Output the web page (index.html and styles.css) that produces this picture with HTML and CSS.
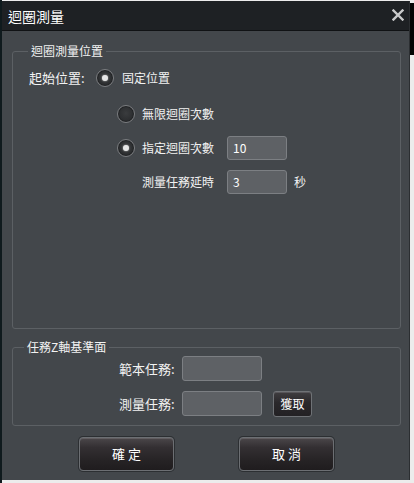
FILE: index.html
```html
<!DOCTYPE html>
<html lang="zh-Hant">
<head>
<meta charset="utf-8">
<title>迴圈測量</title>
<link rel="stylesheet" href="styles.css">
</head>
<body>
<div class="window">
  <div class="titlebar">
    <span class="title">迴圈測量</span>
    <svg class="close" width="12" height="12" viewBox="0 0 12 12" aria-label="close">
      <path d="M1.5 1.5 L10.5 10.5 M10.5 1.5 L1.5 10.5" stroke="#c9cacb" stroke-width="2.4" stroke-linecap="square" fill="none"/>
    </svg>
  </div>
  <div class="content">
    <fieldset class="group group-loop">
      <legend>迴圈測量位置</legend>
      <div class="loop-body">
        <div class="row-start">
          <span class="label-start">起始位置:</span>
          <span class="radio checked"></span>
          <span class="opt">固定位置</span>
        </div>
        <div class="loop-grid">
          <span class="radio"></span>
          <span class="opt wide">無限迴圈次數</span>
          <span class="radio checked"></span>
          <span class="opt">指定迴圈次數</span>
          <span class="field">10</span>
          <span class="unit"></span>
          <span class="cell"></span>
          <span class="opt">測量任務延時</span>
          <span class="field">3</span>
          <span class="unit">秒</span>
        </div>
      </div>
    </fieldset>
    <fieldset class="group group-z">
      <legend>任務Z軸基準面</legend>
      <div class="z-grid">
        <span class="label">範本任務:</span>
        <span class="field field-wide"></span>
        <span class="cell"></span>
        <span class="label">測量任務:</span>
        <span class="field field-wide"></span>
        <span class="btn-small">獲取</span>
      </div>
    </fieldset>
    <div class="actions">
      <span class="btn">確 定</span>
      <span class="btn">取 消</span>
    </div>
  </div>
</div>
</body>
</html>
```

FILE: styles.css
```css
* { box-sizing: border-box; }

html, body { margin: 0; padding: 0; }

body {
  width: 414px;
  height: 483px;
  overflow: hidden;
  padding: 1px 0 0 2px;
  font-family: "Noto Sans CJK TC", "Noto Sans", sans-serif;
  font-size: 12px;
  color: #f2f2f2;
  background:
    linear-gradient(#050505, #050505) right 0 top 3px / 4px 52px no-repeat,
    linear-gradient(to right, #0f1a1d 2px, #ececec 2px);
}

.window {
  width: 408px;
  height: 479px;
  background: #43474b;
  border-right: 1px solid #2b2e31;
  display: flex;
  flex-direction: column;
}

.titlebar {
  height: 30px;
  flex: none;
  background: #1e2124;
  border-bottom: 1px solid #101214;
  display: flex;
  align-items: center;
  justify-content: space-between;
  padding: 0 5px 0 6px;
}

.title {
  font-size: 14px;
  line-height: 18px;
  color: #ffffff;
}

.close { display: block; margin-top: -1px; }

.content {
  padding: 0 8px 0 10px;
}

.group {
  margin: 0;
  padding: 0;
  border: 1px solid #5c6064;
  border-radius: 3px;
  min-width: 0;
}

.group legend {
  padding: 0 3px;
  font-size: 12px;
  line-height: 16px;
  color: #f2f2f2;
}

.group-loop { margin-top: 12px; }
.group-loop legend { margin-left: 15px; }

.loop-body {
  height: 269px;
  padding: 7px 0 0 16px;
}

.row-start {
  display: flex;
  align-items: center;
  height: 24px;
}

.label-start {
  width: 67px;
  font-size: 13px;
  line-height: 18px;
}

.row-start .opt { margin-left: 8px; }

.opt {
  line-height: 18px;
  white-space: nowrap;
}

.radio {
  width: 18px;
  height: 18px;
  border-radius: 50%;
  flex: none;
  background: radial-gradient(circle at 50% 45%, #3a3c3e 0%, #2a2c2e 70%);
  border: 1px solid #7a7c7f;
  box-shadow: inset 0 0 0 1px #222426;
  display: flex;
  align-items: center;
  justify-content: center;
}

.radio.checked::after {
  content: "";
  width: 6px;
  height: 6px;
  border-radius: 50%;
  background: #e6e6e6;
  box-shadow: 0 0 2px #bdbdbd;
}

.loop-grid {
  margin: 12px 0 0 88px;
  display: grid;
  grid-template-columns: 18px 78px 60px auto;
  grid-template-rows: 24px 24px 24px;
  column-gap: 7px;
  row-gap: 10px;
  align-items: center;
}

.loop-grid .wide { grid-column: 2 / -1; }

.field {
  height: 24px;
  background: #5e6165;
  border: 1px solid #7c7f83;
  border-radius: 3px;
  padding: 0 5px;
  line-height: 22px;
  font-size: 12px;
  color: #ffffff;
}

.unit { line-height: 18px; }

.group-z { margin-top: 10px; }
.group-z legend { margin-left: 11px; }

.z-grid {
  height: 70px;
  padding: 1px 0 9px 106px;
  display: grid;
  grid-template-columns: 57px 80px auto;
  grid-template-rows: 25px 25px;
  column-gap: 6px;
  row-gap: 10px;
  align-items: center;
}

.z-grid .label {
  font-size: 13px;
  line-height: 18px;
  white-space: nowrap;
}

.field-wide { height: 25px; }

.btn-small {
  width: 39px;
  height: 26px;
  margin-left: 5px;
  margin-top: 1px;
  border: 1px solid #6f7276;
  border-radius: 3px;
  background: linear-gradient(#3f3d40, #2a282b 45%, #232124);
  box-shadow: inset 0 1px 0 #58565a;
  display: flex;
  align-items: center;
  justify-content: center;
  line-height: 18px;
  color: #ffffff;
}

.actions {
  margin-top: 11px;
  padding-left: 67px;
  display: flex;
  gap: 65px;
}

.btn {
  width: 95px;
  height: 34px;
  border: 1px solid #6c6f73;
  border-radius: 4px;
  background: linear-gradient(#4b474a, #332f32 30%, #262325 70%, #1f1c1e);
  box-shadow: inset 0 1px 0 #615d60, 0 0 0 1px #2c2f32;
  display: flex;
  align-items: center;
  justify-content: center;
  font-size: 13px;
  line-height: 18px;
  color: #ffffff;
  white-space: pre;
}
```
